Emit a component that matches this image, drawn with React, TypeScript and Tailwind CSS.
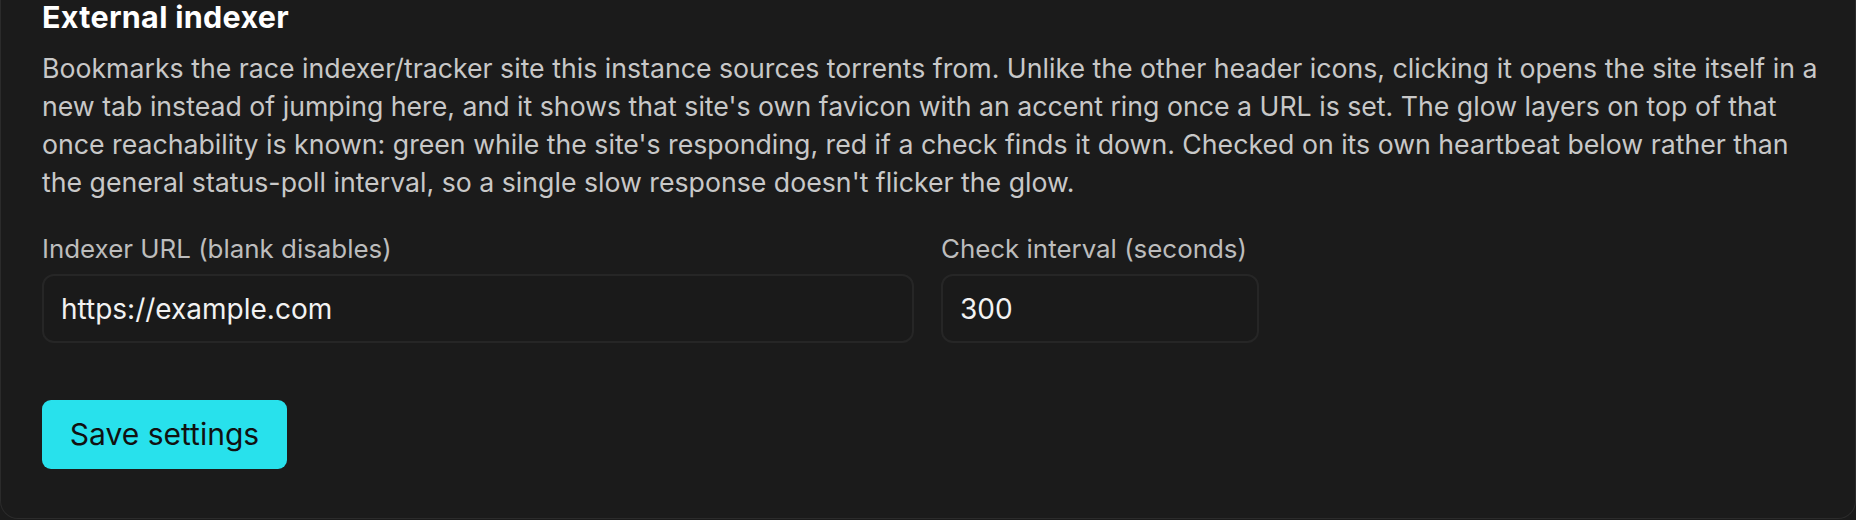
export default function App() {
    return (
        <div className="min-h-screen bg-[#1b1b1b] font-['Inter','Noto_Sans',sans-serif]">
            <section className="h-[519px] rounded-b-[18px] border-x border-b border-[#2b2b2b] bg-[#1b1b1b] pl-[41px] pr-[36px]">
                <h2 className="text-[30.5px] font-bold leading-[34px] tracking-[0.3px] text-white">External indexer</h2>

                <p className="mt-[15px] text-[26.7px] leading-[38px] text-[#c8c8c8]">
                    Bookmarks the race indexer/tracker site this instance sources torrents from. Unlike the other header icons, clicking it opens the site itself in a new tab instead of jumping here, and it shows that site's own favicon with an accent ring once a URL is set. The glow layers on top of that once reachability is known: green while the site's responding, red if a check finds it down. Checked on its own heartbeat below rather than the general status-poll interval, so a single slow response doesn't flicker the glow.
                </p>

                <div className="mt-[33px] flex gap-[27px]">
                    <label className="block w-[872px]">
                        <span className="block text-[25.9px] leading-[30px] text-[#bdbdbd]">Indexer URL (blank disables)</span>
                        <input
                            className="mt-[10px] h-[69px] w-full rounded-[12px] border-2 border-[#262626] bg-[#1a1a1a] px-[17px] text-[28px] text-[#f2f2f2] outline-none"
                            type="text"
                            defaultValue="https://example.com"
                        />
                    </label>

                    <label className="block w-[318px]">
                        <span className="block text-[25.9px] leading-[30px] text-[#bdbdbd]">Check interval (seconds)</span>
                        <input
                            className="mt-[10px] h-[69px] w-full rounded-[12px] border-2 border-[#262626] bg-[#1a1a1a] px-[17px] text-[28px] text-[#f2f2f2] outline-none"
                            type="text"
                            defaultValue="300"
                        />
                    </label>
                </div>

                <button className="mt-[57px] h-[69px] w-[245px] rounded-[9px] bg-[#28e1ec] text-[30px] text-[#111111]">
                    Save settings
                </button>
            </section>
        </div>
    );
}
